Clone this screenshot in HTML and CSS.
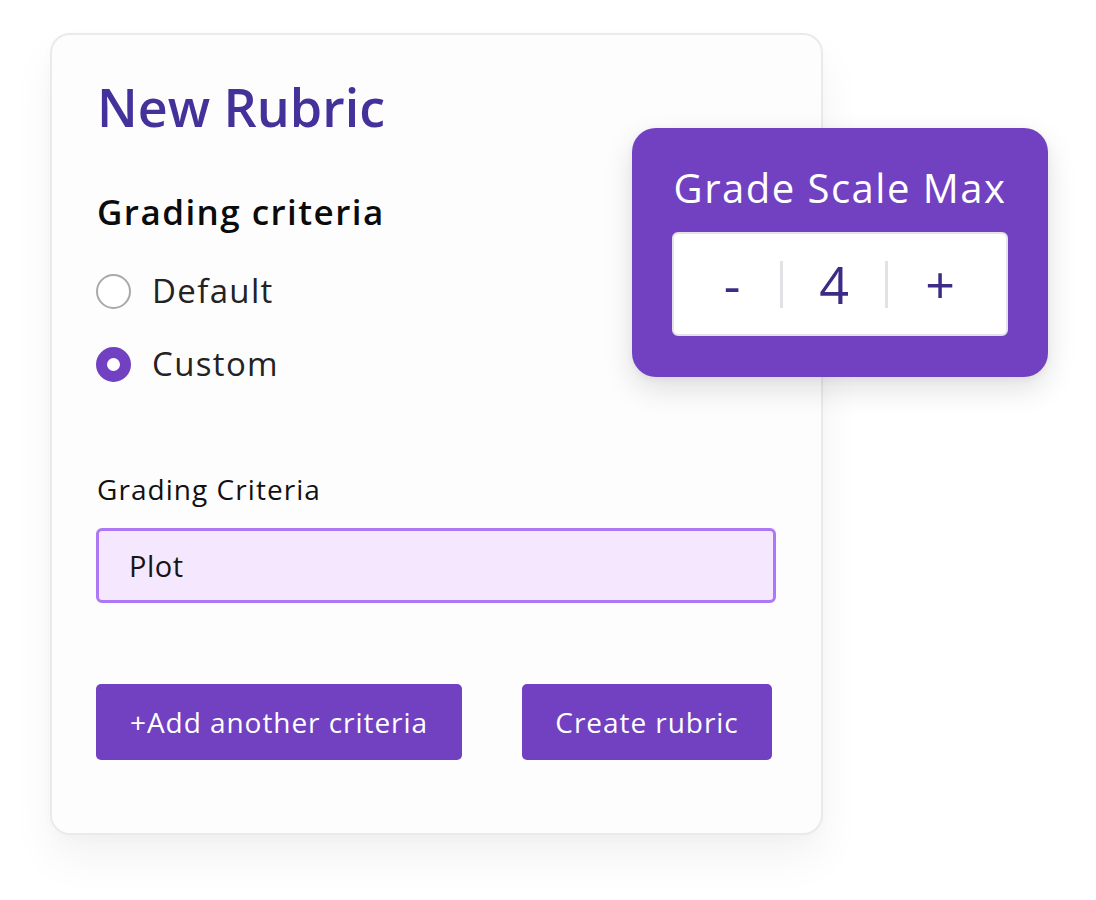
FILE: index.html
```html
<!DOCTYPE html>
<html lang="en">
<head>
<meta charset="utf-8">
<title>New Rubric</title>
<link rel="stylesheet" href="styles.css">
</head>
<body>
<div class="stage">
  <div class="card">
    <h1 class="title">New Rubric</h1>
    <h2 class="section">Grading criteria</h2>
    <div class="radios">
      <label class="radio"><span class="dot"></span><span class="radio-text">Default</span></label>
      <label class="radio"><span class="dot dot-on"></span><span class="radio-text">Custom</span></label>
    </div>
    <div class="field-label">Grading Criteria</div>
    <div class="input">Plot</div>
    <div class="actions">
      <button class="btn btn-add">+Add another criteria</button>
      <button class="btn btn-create">Create rubric</button>
    </div>
  </div>
  <div class="popover">
    <div class="pop-title">Grade Scale Max</div>
    <div class="stepper">
      <span class="step step-minus">-</span>
      <span class="divider"></span>
      <span class="step step-value">4</span>
      <span class="divider"></span>
      <span class="step step-plus">+</span>
    </div>
  </div>
</div>
</body>
</html>
```
FILE: styles.css
```css
* { box-sizing: border-box; }
html, body { margin: 0; padding: 0; background: #ffffff; }
body { font-family: "Open Sans", "Liberation Sans", sans-serif; color: #111; }

.stage { position: relative; width: 1096px; height: 900px; padding: 33px 0 0 50px; }

.card {
  width: 773px;
  height: 802px;
  border: 2px solid #ebe9ee;
  border-radius: 20px;
  background: #fefdfe;
  padding: 42px 0 0 45px;
  box-shadow: 0 24px 44px rgba(0, 0, 0, 0.05), 0 4px 12px rgba(0, 0, 0, 0.02);
}

.title {
  margin: 0;
  font-size: 52px;
  line-height: 60px;
  font-weight: 600;
  color: #45319a;
}

.section {
  margin: 53px 0 0;
  font-size: 35px;
  line-height: 44px;
  font-weight: 600;
  letter-spacing: 1.45px;
  color: #0b0b0b;
}

.radios { margin-top: 37px; display: flex; flex-direction: column; gap: 33px; }
.radio { display: flex; align-items: center; gap: 21px; height: 40px; }
.dot {
  width: 35px; height: 35px; border-radius: 50%;
  border: 2px solid #a9a9a9; background: #fff; margin-left: -1px;
}
.dot-on { border: 11.5px solid #7141c2; }
.radio-text { font-size: 33px; line-height: 40px; letter-spacing: 1.35px; color: #232323; }

.field-label {
  margin-top: 87px;
  font-size: 28px;
  line-height: 36px;
  letter-spacing: 1.05px;
  color: #111;
}

.input {
  margin-top: 21px;
  width: 680px;
  height: 75px;
  margin-left: -1px;
  border: 3px solid #ad78f6;
  border-radius: 6px;
  background: #f5e8fe;
  padding-left: 30px;
  display: flex;
  align-items: center;
  font-size: 29px;
  letter-spacing: 0.5px;
  color: #151515;
}

.actions { margin-top: 81px; margin-left: -1px; display: flex; gap: 60px; }
.btn {
  height: 76px;
  border: none;
  border-radius: 5px;
  background: #7141c2;
  color: #fff;
  font-family: "Open Sans", "Liberation Sans", sans-serif;
  font-size: 28px;
  letter-spacing: 0.95px;
  padding: 0;
}
.btn-add { width: 366px; }
.btn-create { width: 250px; }

.popover {
  position: absolute;
  left: 632px;
  top: 128px;
  width: 416px;
  height: 249px;
  border-radius: 24px;
  background: #7141c2;
  padding-top: 36px;
  display: flex;
  flex-direction: column;
  align-items: center;
  box-shadow: 0 12px 30px rgba(0, 0, 0, 0.12), 0 2px 8px rgba(0, 0, 0, 0.05);
}
.pop-title {
  font-size: 40px;
  line-height: 48px;
  letter-spacing: 1.5px;
  color: #fff;
}
.stepper {
  margin-top: 20px;
  width: 336px;
  height: 104px;
  background: #fff;
  border: 2px solid #e4e2e8;
  border-radius: 6px;
  display: flex;
  align-items: center;
  padding-left: 10px;
  color: #3d2b86;
}
.step { text-align: center; font-size: 52px; line-height: 60px; }
.step-minus { width: 96px; }
.step-value { width: 102px; }
.step-plus { width: 104px; font-weight: 500; }
.divider { width: 3px; height: 47px; background: #e3e1e6; }
```
